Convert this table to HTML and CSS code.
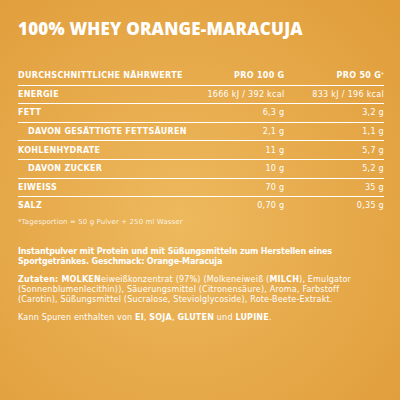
FILE: index.html
```html
<!DOCTYPE html>
<html>

<head>
    <meta charset="UTF-8">
    <title>100% Whey Orange-Maracuja</title>
    <link rel="stylesheet" href="styles.css">
</head>

<body>
    <div class="label">
        <h1 class="title">100% WHEY ORANGE-MARACUJA</h1>

        <table class="nutrition">
            <thead>
                <tr>
                    <th class="name">DURCHSCHNITTLICHE NÄHRWERTE</th>
                    <th class="value">PRO 100 G</th>
                    <th class="value">PRO 50 G<sup>*</sup></th>
                </tr>
            </thead>
            <tbody>
                <tr>
                    <td class="name">ENERGIE</td>
                    <td class="value">1666 kJ / 392 kcal</td>
                    <td class="value">833 kJ / 196 kcal</td>
                </tr>
                <tr>
                    <td class="name">FETT</td>
                    <td class="value">6,3 g</td>
                    <td class="value">3,2 g</td>
                </tr>
                <tr>
                    <td class="name sub">DAVON GESÄTTIGTE FETTSÄUREN</td>
                    <td class="value">2,1 g</td>
                    <td class="value">1,1 g</td>
                </tr>
                <tr>
                    <td class="name">KOHLENHYDRATE</td>
                    <td class="value">11 g</td>
                    <td class="value">5,7 g</td>
                </tr>
                <tr>
                    <td class="name sub">DAVON ZUCKER</td>
                    <td class="value">10 g</td>
                    <td class="value">5,2 g</td>
                </tr>
                <tr>
                    <td class="name">EIWEISS</td>
                    <td class="value">70 g</td>
                    <td class="value">35 g</td>
                </tr>
                <tr>
                    <td class="name">SALZ</td>
                    <td class="value">0,70 g</td>
                    <td class="value">0,35 g</td>
                </tr>
            </tbody>
        </table>

        <div class="footnote">*Tagesportion = 50 g Pulver + 250 ml Wasser</div>

        <p class="description">Instantpulver mit Protein und mit Süßungsmitteln zum Herstellen eines Sportgetränkes. Geschmack: Orange-Maracuja</p>

        <p class="text"><b>Zutaten: MOLKEN</b>eiweißkonzentrat (97%) (Molkeneiweiß (<b>MILCH</b>), Emulgator (Sonnenblumenlecithin)), Säuerungsmittel (Citronensäure), Aroma, Farbstoff (Carotin), Süßungsmittel (Sucralose, Steviolglycoside), Rote-Beete-Extrakt.</p>

        <p class="text">Kann Spuren enthalten von <b>EI</b>, <b>SOJA</b>, <b>GLUTEN</b> und <b>LUPINE</b>.</p>
    </div>
</body>

</html>
```

FILE: styles.css
```css
html,
body {
    margin: 0;
    padding: 0;
    height: 100%;
}

body {
    font-family: 'DejaVu Sans', 'Liberation Sans', sans-serif;
    color: #fff;
    background: radial-gradient(ellipse at 45% 55%, #edb95d 0%, #e8ad4f 40%, #e09c39 100%);
}

.label {
    padding: 17px 16px 0 18px;
}

.title {
    margin: 0 0 26px;
    font-family: 'Open Sans', 'Liberation Sans', sans-serif;
    font-size: 17px;
    font-weight: 800;
    line-height: 24px;
    letter-spacing: 0.2px;
}

.nutrition {
    width: 100%;
    border-collapse: collapse;
    font-size: 8px;
    letter-spacing: 0.3px;
}

.nutrition th,
.nutrition td {
    height: 17.6px;
    padding: 0;
    border-bottom: 1px solid #fff;
    font-weight: bold;
    white-space: nowrap;
}

.nutrition tbody tr:last-child td {
    border-bottom: none;
}

.nutrition .name {
    text-align: left;
    width: 182px;
}

.nutrition .sub {
    padding-left: 10px;
}

.nutrition .value {
    text-align: right;
    font-weight: normal;
}

.nutrition th.value {
    font-weight: bold;
}

.nutrition td.value:last-child,
.nutrition th.value:last-child {
    width: 103px;
}

.nutrition sup {
    font-size: 5px;
    vertical-align: top;
}

.footnote {
    margin-top: 3px;
    font-size: 7px;
    letter-spacing: 0.1px;
    color: rgba(255, 255, 255, 0.85);
}

.description,
.text {
    margin: 0 0 8px;
    font-size: 8px;
    line-height: 10px;
}

.description {
    margin-top: 21px;
    font-weight: bold;
    letter-spacing: -0.15px;
}

.text {
    max-width: 358px;
    letter-spacing: 0.2px;
}
```
